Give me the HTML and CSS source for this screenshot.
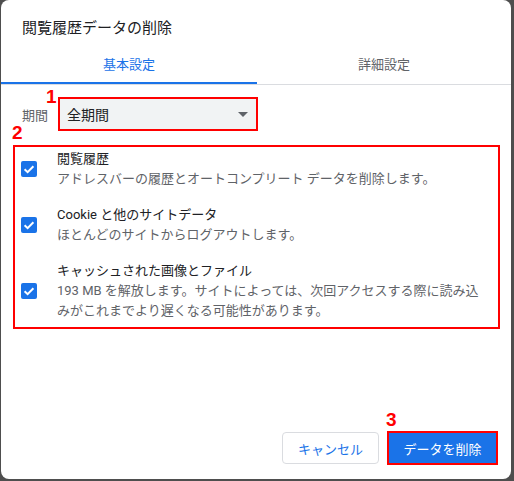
FILE: index.html
```html
<!DOCTYPE html>
<html lang="ja">
<head>
<meta charset="utf-8">
<title>閲覧履歴データの削除</title>
<link rel="stylesheet" href="styles.css">
</head>
<body>
<div class="dialog">
  <div class="title">閲覧履歴データの削除</div>
  <div class="tabs">
    <div class="tab active">基本設定</div>
    <div class="tab">詳細設定</div>
  </div>
  <div class="period">
    <span class="period-label">期間</span>
    <div class="mark mark-select">
      <span class="num num1">1</span>
      <div class="select">
        <span class="select-text">全期間</span>
        <span class="arrow"></span>
      </div>
    </div>
  </div>
  <div class="mark mark-list">
    <span class="num num2">2</span>
    <div class="item">
      <span class="checkbox"><svg width="16" height="16" viewBox="0 0 16 16"><path d="M3.6 8.2 L6.6 11.1 L12.4 5.2" fill="none" stroke="#fff" stroke-width="2"/></svg></span>
      <div class="item-text">
        <div class="item-title">閲覧履歴</div>
        <div class="item-desc">アドレスバーの履歴とオートコンプリート データを削除します。</div>
      </div>
    </div>
    <div class="item">
      <span class="checkbox"><svg width="16" height="16" viewBox="0 0 16 16"><path d="M3.6 8.2 L6.6 11.1 L12.4 5.2" fill="none" stroke="#fff" stroke-width="2"/></svg></span>
      <div class="item-text">
        <div class="item-title">Cookie と他のサイトデータ</div>
        <div class="item-desc">ほとんどのサイトからログアウトします。</div>
      </div>
    </div>
    <div class="item">
      <span class="checkbox"><svg width="16" height="16" viewBox="0 0 16 16"><path d="M3.6 8.2 L6.6 11.1 L12.4 5.2" fill="none" stroke="#fff" stroke-width="2"/></svg></span>
      <div class="item-text">
        <div class="item-title">キャッシュされた画像とファイル</div>
        <div class="item-desc">193 MB を解放します。サイトによっては、次回アクセスする際に読み込<br>みがこれまでより遅くなる可能性があります。</div>
      </div>
    </div>
  </div>
  <div class="footer">
    <button class="btn cancel">キャンセル</button>
    <div class="mark mark-btn">
      <span class="num num3">3</span>
      <button class="btn primary">データを削除</button>
    </div>
  </div>
</div>
</body>
</html>
```
FILE: styles.css
```css
* { box-sizing: border-box; }
html, body { margin: 0; padding: 0; }
body {
  width: 514px;
  height: 481px;
  background: #4e4e4e;
  font-family: Roboto, "Noto Sans CJK JP", sans-serif;
  overflow: hidden;
}
.dialog {
  margin-left: 1px;
  width: 510px;
  height: 479px;
  background: #fff;
  border-radius: 8px;
  display: flex;
  flex-direction: column;
}
.title {
  height: 45px;
  padding: 19px 0 0 21px;
  font-size: 15px;
  line-height: 18px;
  color: #202124;
}
.tabs {
  display: flex;
  height: 40px;
  border-bottom: 1px solid #dadce0;
}
.tab {
  width: 256px;
  height: 39px;
  display: flex;
  align-items: center;
  justify-content: center;
  padding-bottom: 3px;
  font-size: 13px;
  color: #5f6368;
}
.tab + .tab { width: 254px; }
.tab.active {
  color: #1a73e8;
  border-bottom: 2px solid #1a73e8;
  padding-bottom: 1px;
}
.period {
  display: flex;
  align-items: center;
  margin-top: 12px;
  padding-left: 21px;
}
.period-label {
  font-size: 13px;
  color: #5f6368;
  width: 36px;
}
.mark {
  position: relative;
  border: 2px solid #ff0000;
}
.num {
  position: absolute;
  color: #ff0000;
  font-family: "Liberation Sans", Arial, sans-serif;
  font-weight: bold;
  font-size: 19px;
  line-height: 19px;
}
.num1 { left: -14px; top: -12px; }
.num2 { left: -3px; top: -24px; }
.num3 { left: -3px; top: -23px; }
.select {
  width: 196px;
  height: 30px;
  background: #f1f3f4;
  display: flex;
  align-items: center;
  justify-content: space-between;
  padding: 0 6px 0 7px;
}
.select-text {
  font-size: 14px;
  color: #202124;
}
.arrow {
  width: 0;
  height: 0;
  border-left: 5px solid transparent;
  border-right: 5px solid transparent;
  border-top: 5px solid #5f6368;
  margin-right: 2px;
}
.mark-list {
  margin: 14px 0 0 12px;
  width: 487px;
  padding: 2px 0 6px 6px;
  display: flex;
  flex-direction: column;
  gap: 16px;
}
.item {
  display: flex;
  align-items: center;
  gap: 20px;
}
.checkbox {
  width: 16px;
  height: 16px;
  border-radius: 2px;
  background: #1a73e8;
  display: block;
  flex: none;
}
.checkbox svg { display: block; }
.item-text {
  font-size: 13px;
  line-height: 20px;
}
.item-title { color: #202124; }
.item-desc { color: #5f6368; }
.footer {
  margin-top: auto;
  display: flex;
  justify-content: flex-end;
  align-items: center;
  gap: 8px;
  padding: 0 13px 14px 0;
}
.btn {
  font-family: Roboto, "Noto Sans CJK JP", sans-serif;
  font-size: 13px;
  border-radius: 4px;
  margin: 0;
  cursor: pointer;
}
.cancel {
  width: 97px;
  height: 32px;
  background: #fff;
  border: 1px solid #dadce0;
  color: #1a73e8;
}
.primary {
  display: block;
  width: 107px;
  height: 30px;
  background: #1a73e8;
  border: none;
  border-radius: 0;
  color: #fff;
}
```
